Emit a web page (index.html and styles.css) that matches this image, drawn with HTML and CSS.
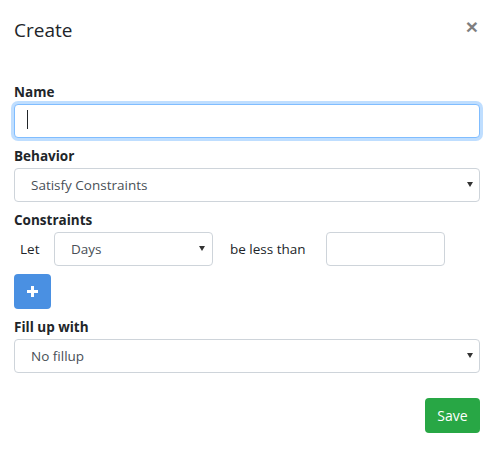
FILE: index.html
```html
<!DOCTYPE html>
<html>
<head>
<meta charset="utf-8">
<link rel="stylesheet" href="styles.css">
</head>
<body>
<div class="modal">
  <div class="header">
    <h5 class="title">Create</h5>
    <button class="close" type="button">&times;</button>
  </div>
  <div class="body">
    <label class="label">Name</label>
    <div class="field">
      <input class="control focused" type="text">
      <span class="caret"></span>
    </div>

    <label class="label">Behavior</label>
    <div class="field">
      <select class="control select"><option>Satisfy Constraints</option></select>
      <svg class="arrow" width="6" height="5" viewBox="0 0 6 5"><path d="M0 0H6L3 5Z" fill="#333"/></svg>
    </div>

    <label class="label">Constraints</label>
    <div class="row">
      <span class="let">Let</span>
      <div class="field days">
        <select class="control select"><option>Days</option></select>
        <svg class="arrow" width="6" height="5" viewBox="0 0 6 5"><path d="M0 0H6L3 5Z" fill="#333"/></svg>
      </div>
      <span class="less">be less than</span>
      <input class="control value" type="text">
    </div>

    <button class="add" type="button">
      <svg width="11" height="11" viewBox="0 0 11 11"><rect x="4" y="0" width="3" height="11" fill="#fff"/><rect x="0" y="4" width="11" height="3" fill="#fff"/></svg>
    </button>

    <label class="label">Fill up with</label>
    <div class="field">
      <select class="control select"><option>No fillup</option></select>
      <svg class="arrow" width="6" height="5" viewBox="0 0 6 5"><path d="M0 0H6L3 5Z" fill="#333"/></svg>
    </div>
  </div>
  <div class="footer">
    <button class="save" type="button">Save</button>
  </div>
</div>
</body>
</html>
```
FILE: styles.css
```css
* { box-sizing: border-box; }
html, body { margin: 0; padding: 0; background: #fff; }
body {
  font-family: "Open Sans", "Noto Sans", sans-serif;
  color: #212529;
  width: 493px;
  height: 452px;
  overflow: hidden;
}
.modal { padding: 0 13px 0 14px; }
.header {
  display: flex;
  justify-content: space-between;
  align-items: flex-start;
  padding-top: 15px;
  height: 82px;
}
.title {
  margin: 0;
  font-size: 19px;
  font-weight: 400;
  line-height: 30px;
}
.close {
  border: 0;
  background: none;
  padding: 0;
  margin: 1px 2px 0 0;
  font-family: "Liberation Sans", sans-serif;
  font-size: 21px;
  font-weight: 700;
  line-height: 1;
  color: #000;
  opacity: 0.5;
}
.body { display: flex; flex-direction: column; }
.label {
  display: block;
  font-size: 13.5px;
  font-weight: 700;
  line-height: 21px;
  height: 22px;
}
.field { position: relative; }
.control {
  display: block;
  width: 100%;
  height: 34px;
  margin: 0;
  padding: 0 16px;
  border: 1px solid #ced4da;
  border-radius: 4px;
  background: #fff;
  font-family: "Open Sans", "Noto Sans", sans-serif;
  font-size: 13.5px;
  color: #495057;
  outline: none;
}
.focused {
  border-color: #80bdff;
  box-shadow: 0 0 0 3px rgba(0, 123, 255, 0.25);
}
.caret {
  position: absolute;
  left: 13px;
  top: 6px;
  width: 1px;
  height: 19px;
  background: #212529;
}
.select {
  -webkit-appearance: none;
  appearance: none;
}
.arrow {
  position: absolute;
  right: 7px;
  top: 14px;
  pointer-events: none;
}
.body > .field { margin-bottom: 8px; }
.row {
  display: flex;
  align-items: center;
  height: 34px;
  margin-bottom: 8px;
}
.let {
  font-size: 13.5px;
  padding-left: 6px;
  width: 40px;
}
.days { width: 159px; }
.days .arrow { right: 8px; }
.less {
  font-size: 13.5px;
  margin-left: 17px;
  width: 96px;
}
.value { width: 119px; }
.add {
  width: 37px;
  height: 35px;
  border: 0;
  border-radius: 4px;
  background: #4a90e2;
  padding: 0;
  display: flex;
  align-items: center;
  justify-content: center;
  margin-bottom: 8px;
}
.footer {
  display: flex;
  justify-content: flex-end;
  padding-top: 17px;
}
.save {
  width: 55px;
  height: 35px;
  border: 0;
  border-radius: 4px;
  background: #28a745;
  color: #fff;
  font-family: "Open Sans", "Noto Sans", sans-serif;
  font-size: 14px;
  padding: 0;
}
```
